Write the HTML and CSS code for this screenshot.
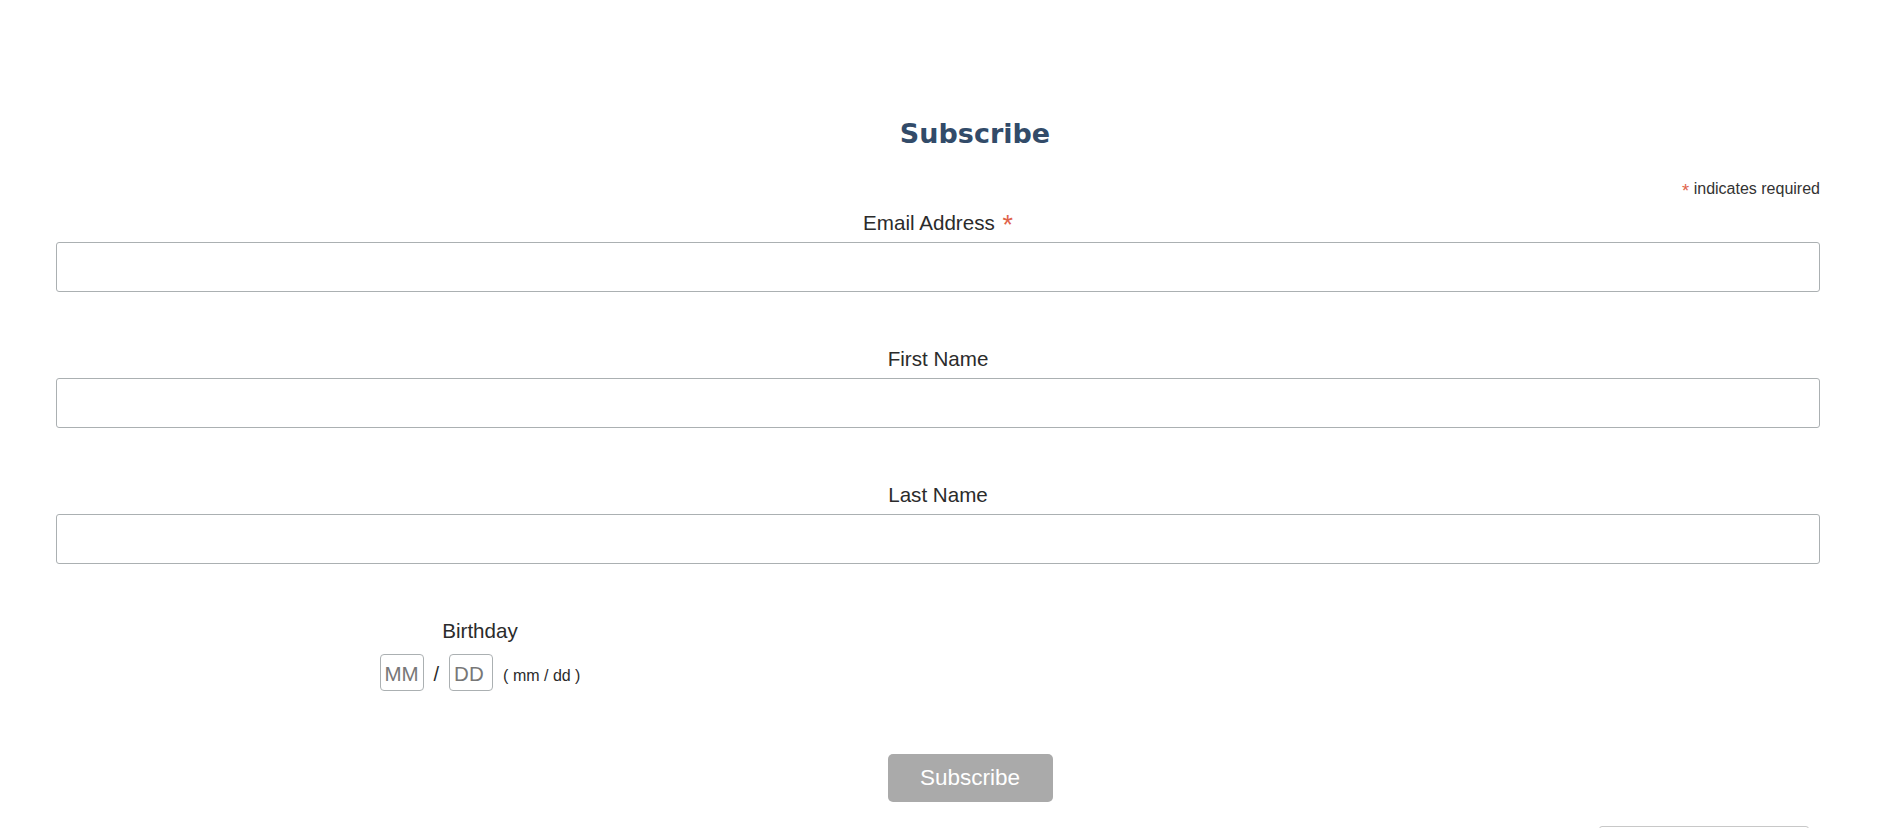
FILE: index.html
```html
<!DOCTYPE html>
<html lang="en">
<head>
    <meta charset="UTF-8">
    <meta name="viewport" content="width=device-width, initial-scale=1.0">
    <title>Subscribe</title>
    <link rel="stylesheet" href="styles.css">
</head>
<body>

    <div class="signup">
        <form class="signup-form">
            <h2>Subscribe</h2>
            <div class="required-note"><span class="asterisk">*</span> indicates required</div>

            <div class="field">
                <label for="email">Email Address <span class="asterisk">*</span></label>
                <input type="email" id="email">
            </div>

            <div class="field">
                <label for="fname">First Name</label>
                <input type="text" id="fname">
            </div>

            <div class="field">
                <label for="lname">Last Name</label>
                <input type="text" id="lname">
            </div>

            <div class="field birthday">
                <label>Birthday</label>
                <div class="date-row">
                    <input type="text" class="date-part" placeholder="MM" maxlength="2">
                    <span class="slash">/</span>
                    <input type="text" class="date-part" placeholder="DD" maxlength="2">
                    <span class="date-hint">( mm / dd )</span>
                </div>
            </div>

            <div class="actions">
                <button type="button" class="subscribe-btn">Subscribe</button>
            </div>

            <div class="badge-row">
                <div class="badge"></div>
            </div>
        </form>
    </div>

</body>
</html>
```

FILE: styles.css
```css
body {
    margin: 0;
    background-color: #fff;
    font-family: "Liberation Sans", Arial, sans-serif;
    color: #2b2b2b;
    overflow: hidden;
}

.signup {
    padding: 117px 62px 0 56px;
}

h2 {
    margin: 0;
    padding-left: 74px;
    font-family: "DejaVu Sans", sans-serif;
    font-weight: 700;
    font-size: 27px;
    line-height: 34px;
    text-align: center;
    color: #324b69;
}

.required-note {
    margin: 29px 0 13px;
    font-size: 16px;
    line-height: 18px;
    text-align: right;
    color: #333;
}

.asterisk {
    position: relative;
    color: #e0634b;
}

.required-note .asterisk {
    font-size: 1.15em;
    line-height: 0;
    top: 3px;
}

.field label .asterisk {
    font-size: 1.3em;
    line-height: 0;
    top: 4px;
    margin-left: 2px;
}

.field {
    margin-bottom: 55px;
}

.field label {
    display: block;
    font-size: 20.6px;
    line-height: 23px;
    text-align: center;
    margin-bottom: 8px;
}

.field input {
    display: block;
    width: 100%;
    height: 50px;
    box-sizing: border-box;
    border: 1px solid #abb0b2;
    border-radius: 3px;
    padding: 0 10px;
    font-size: 20px;
    font-family: inherit;
}

.birthday {
    width: 848px;
    margin-bottom: 0;
}

.birthday label {
    margin-bottom: 12px;
}

.date-row {
    display: flex;
    justify-content: center;
    align-items: baseline;
    gap: 10px;
}

.field .date-part {
    width: 44px;
    height: 37px;
    padding: 2px 0 0 4px;
    border-radius: 4px;
    font-size: 20.5px;
    color: #555;
}

.date-part::placeholder {
    color: #777;
}

.slash {
    font-size: 20px;
}

.date-hint {
    font-size: 16px;
}

.actions {
    margin-top: 63px;
    padding-left: 64px;
    text-align: center;
}

.subscribe-btn {
    width: 165px;
    height: 48px;
    border: none;
    border-radius: 5px;
    background-color: #aaa;
    color: #fff;
    font-family: inherit;
    font-size: 22.5px;
    cursor: pointer;
}

.badge-row {
    display: flex;
    justify-content: flex-end;
    margin-top: 24px;
    padding-right: 11px;
}

.badge {
    width: 208px;
    height: 40px;
    border: 1px solid #c8c8c8;
    border-radius: 3px;
}
```
